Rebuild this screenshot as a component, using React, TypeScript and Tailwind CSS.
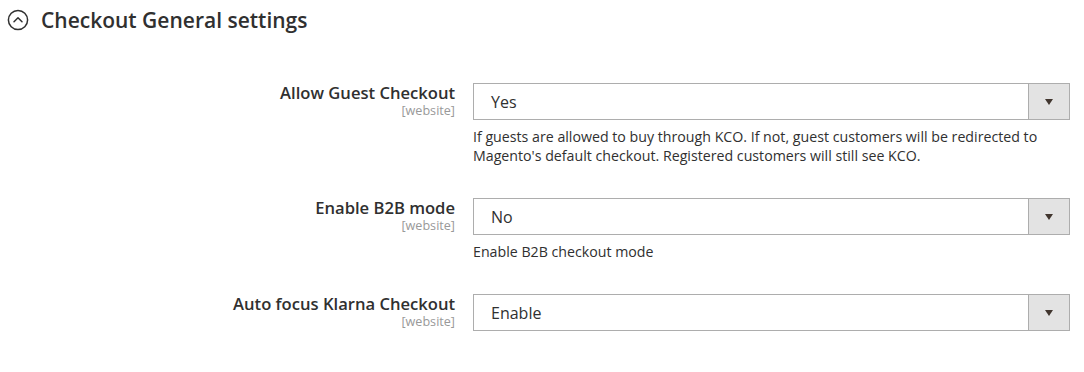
const rows = [
  {
    label: 'Allow Guest Checkout',
    value: 'Yes',
    note: "If guests are allowed to buy through KCO. If not, guest customers will be redirected to Magento's default checkout. Registered customers will still see KCO.",
  },
  { label: 'Enable B2B mode', value: 'No', note: 'Enable B2B checkout mode' },
  { label: 'Auto focus Klarna Checkout', value: 'Enable', note: '' },
];

function Chevron() {
  return (
    <svg width="22" height="22" viewBox="0 0 22 22" fill="none">
      <circle cx="11" cy="11" r="9.6" stroke="#303030" strokeWidth="1.5" />
      <path d="M7 12.8 L11 8.8 L15 12.8" stroke="#303030" strokeWidth="1.5" strokeLinecap="round" strokeLinejoin="round" />
    </svg>
  );
}

export default function App() {
  return (
    <div className="w-[1084px] h-[372px] bg-white text-[#303030]" style={{ fontFamily: '"Open Sans", sans-serif' }}>
      <div className="flex items-center gap-[12px] pl-[7px] pt-[8px]">
        <Chevron />
        <h2 className="text-[21px] font-semibold leading-[24px]">Checkout General settings</h2>
      </div>

      <div className="mt-[51px] flex flex-col gap-[32px]">
        {rows.map((row) => (
          <div key={row.label} className="flex">
            <div className="w-[455px] text-right">
              <div className="text-[16.6px] font-semibold leading-[20px]">{row.label}</div>
              <div className="text-[12.6px] leading-[16px] text-[#999]">[website]</div>
            </div>
            <div className="ml-[18px] w-[597px]">
              <div className="flex h-[37px] border border-[#adadad] bg-white">
                <div className="flex-1 flex items-center pl-[17px] text-[16px]">{row.value}</div>
                <div className="w-[41px] flex items-center justify-center bg-[#e3e3e3] border-l border-[#adadad]">
                  <span className="block w-0 h-0 border-l-[4px] border-r-[4px] border-t-[6px] border-l-transparent border-r-transparent border-t-[#41362f]" />
                </div>
              </div>
              {row.note && (
                <p className="mt-[7px] mb-[1px] text-[14.2px] leading-[19px] text-[#303030]">{row.note}</p>
              )}
            </div>
          </div>
        ))}
      </div>
    </div>
  );
}
